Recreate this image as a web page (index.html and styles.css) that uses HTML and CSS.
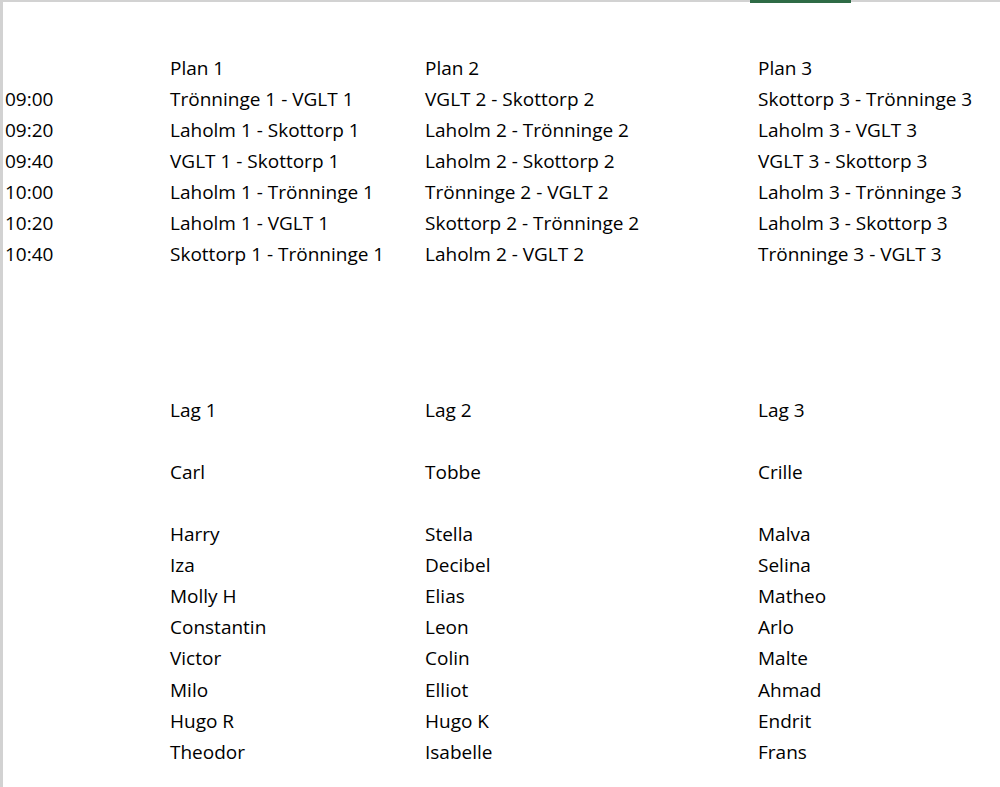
FILE: index.html
```html
<!DOCTYPE html>
<html lang="sv">
<head>
<meta charset="utf-8">
<link rel="stylesheet" href="styles.css">
</head>
<body>
<div class="topbar"><div class="tab-mark"></div></div>
<div class="sheet">
  <div class="row blank"></div>
  <div class="row"><div class="c a"></div><div class="c b">Plan 1</div><div class="c c2">Plan 2</div><div class="c d">Plan 3</div></div>
  <div class="row"><div class="c a">09:00</div><div class="c b">Trönninge 1 - VGLT 1</div><div class="c c2">VGLT 2 - Skottorp 2</div><div class="c d">Skottorp 3 - Trönninge 3</div></div>
  <div class="row"><div class="c a">09:20</div><div class="c b">Laholm 1 - Skottorp 1</div><div class="c c2">Laholm 2 - Trönninge 2</div><div class="c d">Laholm 3 - VGLT 3</div></div>
  <div class="row"><div class="c a">09:40</div><div class="c b">VGLT 1 - Skottorp 1</div><div class="c c2">Laholm 2 - Skottorp 2</div><div class="c d">VGLT 3 - Skottorp 3</div></div>
  <div class="row"><div class="c a">10:00</div><div class="c b">Laholm 1 - Trönninge 1</div><div class="c c2">Trönninge 2 - VGLT 2</div><div class="c d">Laholm 3 - Trönninge 3</div></div>
  <div class="row"><div class="c a">10:20</div><div class="c b">Laholm 1 - VGLT 1</div><div class="c c2">Skottorp 2 - Trönninge 2</div><div class="c d">Laholm 3 - Skottorp 3</div></div>
  <div class="row"><div class="c a">10:40</div><div class="c b">Skottorp 1 - Trönninge 1</div><div class="c c2">Laholm 2 - VGLT 2</div><div class="c d">Trönninge 3 - VGLT 3</div></div>
  <div class="row blank"></div>
  <div class="row blank"></div>
  <div class="row blank"></div>
  <div class="row blank"></div>
  <div class="row"><div class="c a"></div><div class="c b">Lag 1</div><div class="c c2">Lag 2</div><div class="c d">Lag 3</div></div>
  <div class="row blank"></div>
  <div class="row"><div class="c a"></div><div class="c b">Carl</div><div class="c c2">Tobbe</div><div class="c d">Crille</div></div>
  <div class="row blank"></div>
  <div class="row"><div class="c a"></div><div class="c b">Harry</div><div class="c c2">Stella</div><div class="c d">Malva</div></div>
  <div class="row"><div class="c a"></div><div class="c b">Iza</div><div class="c c2">Decibel</div><div class="c d">Selina</div></div>
  <div class="row"><div class="c a"></div><div class="c b">Molly H</div><div class="c c2">Elias</div><div class="c d">Matheo</div></div>
  <div class="row"><div class="c a"></div><div class="c b">Constantin</div><div class="c c2">Leon</div><div class="c d">Arlo</div></div>
  <div class="row"><div class="c a"></div><div class="c b">Victor</div><div class="c c2">Colin</div><div class="c d">Malte</div></div>
  <div class="row"><div class="c a"></div><div class="c b">Milo</div><div class="c c2">Elliot</div><div class="c d">Ahmad</div></div>
  <div class="row"><div class="c a"></div><div class="c b">Hugo R</div><div class="c c2">Hugo K</div><div class="c d">Endrit</div></div>
  <div class="row"><div class="c a"></div><div class="c b">Theodor</div><div class="c c2">Isabelle</div><div class="c d">Frans</div></div>
</div>
</body>
</html>
```
FILE: styles.css
```css
html, body {
  margin: 0;
  padding: 0;
  background: #ffffff;
}
body {
  width: 1000px;
  height: 787px;
  overflow: hidden;
  font-family: "Open Sans", "Liberation Sans", sans-serif;
  font-size: 19px;
  color: #000000;
  border-left: 3px solid #d2d2d2;
  box-sizing: border-box;
}
.topbar {
  height: 2px;
  background: #d2d2d2;
  position: relative;
}
.tab-mark {
  position: absolute;
  left: 747px;
  top: 0;
  width: 101px;
  height: 3px;
  background: #2f6b46;
}
.sheet {
  display: flex;
  flex-direction: column;
  padding-top: 19px;
}
.row {
  display: grid;
  grid-template-columns: 165px 255px 333px 1fr;
  height: 31.1px;
  align-items: center;
}
.c {
  padding-left: 2px;
  white-space: nowrap;
}
```
